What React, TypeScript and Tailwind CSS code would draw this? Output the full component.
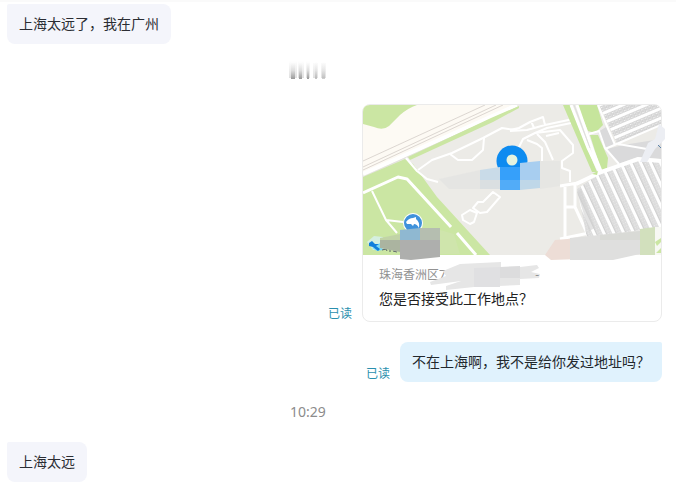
import type { ReactNode } from "react";

const fontStack = "font-['Noto_Sans','Noto_Sans_CJK_SC',sans-serif]";

interface MessageProps {
  children: ReactNode;
}

function ReceivedMessage({ children }: MessageProps) {
  return (
    <div className="flex justify-start">
      <p className="rounded-lg rounded-tl-xs bg-[#f4f5fb] px-3 py-2 text-sm leading-6 text-[#2b2d33]">
        {children}
      </p>
    </div>
  );
}

function SentMessage({ children }: MessageProps) {
  return (
    <div className="mr-[7px] flex items-end justify-end gap-2.5">
      <span className="text-xs leading-4 text-[#2a8fae]">已读</span>
      {children}
    </div>
  );
}

function TimeRow({ children }: MessageProps) {
  return (
    <div className="flex h-15 items-center justify-center pr-15 text-sm text-[#8c8c8c]">
      {children}
    </div>
  );
}

/** Timestamp that has been smudged out */
function SmudgedTime() {
  return (
    <svg width="40" height="18" viewBox="0 0 40 18" className="relative -top-1" aria-hidden="true">
      <defs>
        <linearGradient id="smudge" x1="0" y1="0" x2="0" y2="1">
          <stop offset="0" stopColor="#fff" />
          <stop offset="0.5" stopColor="#dedede" />
          <stop offset="1" stopColor="#999" />
        </linearGradient>
        <linearGradient id="smudgeLight" x1="0" y1="0" x2="0" y2="1">
          <stop offset="0" stopColor="#fff" />
          <stop offset="1" stopColor="#d2d2d2" />
        </linearGradient>
      </defs>
      <path d="M1 0H9V17H1ZM10 0H16V17H10ZM18 0H22V17H18ZM25 2H30V17H25ZM33 2H38V17H33Z" fill="url(#smudgeLight)" opacity="0.7" />
      <g fill="url(#smudge)">
        <rect x="3" y="1" width="4" height="17" />
        <rect x="11" y="1" width="3" height="17" />
        <rect x="19" y="1" width="2" height="17" />
        <rect x="27" y="1" width="2" height="17" opacity="0.6" />
        <rect x="34" y="1" width="3" height="17" opacity="0.5" />
      </g>
    </svg>
  );
}

function LocationMap() {
  return (
    <svg
      viewBox="0 0 298 150"
      className="relative z-10 block w-full overflow-visible"
      role="img"
      aria-label="地图"
    >
      <defs>
        <clipPath id="mapClip">
          <path d="M0 150V7Q0 0 7 0H291Q298 0 298 7V150Z" />
        </clipPath>
        <pattern id="housesTop" width="4" height="9" patternUnits="userSpaceOnUse" patternTransform="rotate(-23 240 10)">
          <rect width="4" height="9" fill="#fff" />
          <rect y="1" width="4" height="6" fill="#e2e2e2" />
          <path d="M0.5 1.5H3V3.5H0.5ZM0.5 4.5H3V6.5H0.5Z" fill="#f5f5f5" stroke="#cacaca" strokeWidth="0.7" />
        </pattern>
        <pattern id="housesBottom" width="3" height="9" patternUnits="userSpaceOnUse" patternTransform="rotate(65 240 80)">
          <rect width="3" height="9" fill="#fff" />
          <rect y="2" width="3" height="6" fill="#e4e4e4" />
          <rect y="7" width="3" height="1" fill="#cfcfcf" />
          <path d="M0.5 2.5H2.3V4H0.5ZM0.5 5H2.3V6.5H0.5Z" fill="#fafafa" stroke="#cfcfcf" strokeWidth="0.6" />
        </pattern>
      </defs>

      <g clipPath="url(#mapClip)">
        <rect width="298" height="150" fill="#ecebe7" />

        {/* Railway */}
        <path d="M0 0H152L0 68Z" fill="#fdfaf4" />
        <path d="M0 0H54Q45 3 37 10L26 21Q20 26 11 22L0 19Z" fill="#cbe6a3" />
        <path d="M0 56L122 0M0 62L133 0M0 65L140 0" fill="none" stroke="#d3cdc8" strokeWidth="0.8" />
        <path d="M0 69L154 0" stroke="#fff" strokeWidth="4" />
        <path d="M0 72L155 2" stroke="#dcdad5" strokeWidth="0.6" />
        <path d="M45 52L128 13L156 1V3L130 17L47 55Z" fill="#cbe6a3" />

        {/* Park */}
        <path d="M0 72L42 54L50 59L74 92L127 150H0Z" fill="#cbe6a3" />
        <g fill="none" stroke="#fff" strokeWidth="3" strokeLinejoin="round">
          <path d="M0 88L35 72L44 74L88 122M94 128L113 150" />
          <path d="M9 86L23 115L34 128M23 115L40 117" strokeWidth="2" />
          <path d="M43 53L54 66L64 74L75 77" strokeWidth="2" />
          <path d="M55 65L69 55L89 48L120 33L139 23L152 25" strokeWidth="2" />
          <path d="M87 49L95 55L109 55L120 45L121 33" strokeWidth="2" />
          <path d="M99 110L107 105L114 108L111 117L107 119L100 115ZM110 103L115 97L120 97L130 87L137 92L124 107L117 108Z" strokeWidth="2" />
        </g>

        {/* Estate streets */}
        <g fill="none" stroke="#fff" strokeWidth="2" strokeLinejoin="round">
          <path d="M147 25L156 23L167 17L180 12L182 20M168 16L171 23M147 26L164 25L182 20L210 14" />
          <path d="M154 46L160 34L172 28L184 23L213 17" />
          <path d="M172 28L197 25L210 40V48L199 56V63L207 66V77" />
          <path d="M164 35L174 39L179 43V56M174 29L182 37L190 55" />
          <path d="M183 31L196 28" />
          <path d="M197 81L215 78M202 82V135M212 80V102H202M212 102L224 128M197 134L226 128" strokeWidth="3" />
        </g>

        {/* Avenue and green belt */}
        <path d="M200 0H207L234 67H229ZM214 0H234L240 20L232 28L225 26Z" fill="#c6e59c" />
        <path d="M227 30H235L245 53L244 63L238 65Z" fill="#c6e59c" />
        <path d="M208 0L225 43L236 66M214 0L230 46L238 66" fill="none" stroke="#fff" strokeWidth="3" />
        <path d="M211 0L227 43" stroke="#d9d9d9" strokeWidth="0.8" />

        {/* Housing blocks */}
        <path d="M236 0H298V21L254 38Z" fill="url(#housesTop)" />
        <path d="M235 27L243 22L252 40L242 43Z" fill="#dadadb" />
        <path d="M244 44L260 40L298 34V54L275 52L255 59Z" fill="#dadadb" />
        <path d="M214 84L238 68L275 56L298 57V122L224 133Z" fill="url(#housesBottom)" />
        <g fill="none" stroke="#fff" strokeWidth="3">
          <path d="M235 0L252 40M226 29L236 26L242 43L256 59" strokeWidth="2" />
          <path d="M242 44L298 20M255 39L284 44" strokeWidth="2" />
          <path d="M213 79L238 67L275 54L298 56" strokeWidth="4" />
        </g>
        <path d="M214 87L218 84L232 123L226 126Z" fill="#d0d0d0" opacity="0.6" />
        <path d="M229 69L235 66L234 70Z" fill="#c6e59c" />
      </g>

      {/* Main pin, pixelated along its lower half */}
      <circle cx="149" cy="56" r="15.5" fill="#0d8bf0" />
      <circle cx="149" cy="55" r="5.5" fill="#e4f3df" />
      <path d="M76 74L117 65V84H86Z" fill="#e4e4e2" opacity="0.8" />
      <path d="M117 65L137 62V75H117Z" fill="#c9dbe8" />
      <path d="M117 75H137V84H117Z" fill="#dadfe1" />
      <path d="M137 62H157V75H137Z" fill="#36a0fa" />
      <path d="M137 75H157V85H137Z" fill="#52acf8" />
      <path d="M157 58L177 56V75H157Z" fill="#a8cef0" />
      <path d="M157 75H177V83L157 85Z" fill="#bfd7e8" />
      <path d="M177 56H197V81L177 84Z" fill="#e6e6e3" />

      {/* Aquarium marker */}
      <circle cx="50" cy="118" r="10" fill="#fff" />
      <circle cx="50" cy="118" r="9" fill="#3f92db" />
      <path d="M43 117Q46 113 50 113L53 112L53 114Q57 117 56 123Q54 119 51 119L50 121L48 119L44 119Z" fill="#fff" />

      {/* Second marker */}
      <path d="M4 137L11 131L20 132V145L10 145Z" fill="#d5efdf" />
      <path d="M9 143L17 138L20 145L14 146Z" fill="#7fdcf5" />
      <path d="M6 138L9 136L12 139L16 139L13 141L17 144L15 146L10 142L6 141Z" fill="#117fdc" />
      <path d="M19 145L23 144L24 146M27 144V147M30 146L34 147" fill="none" stroke="#5c6468" />

      {/* Pixelated label areas */}
      <path d="M17 133L37 129V135H17Z" fill="#c1d3a6" />
      <path d="M17 135H37V147L17 143Z" fill="#abb4a0" />
      <path d="M37 125L57 123V135H37Z" fill="#8fb8d1" />
      <path d="M57 123H77V135H57Z" fill="#b5beb0" />
      <path d="M37 135H77V152L48 155L37 154Z" fill="#aeafad" />
      <path d="M77 125L91 129L97 149H77Z" fill="#cfe5ae" opacity="0.8" />
      <path d="M182 150L192 135L217 133V154L188 155Z" fill="#edddd6" />
      <path d="M207 133L277 126V149L250 155H207Z" fill="#dfdfde" />
      <path d="M237 130L277 126V135H237Z" fill="#d9dad6" />
      <path d="M277 124L292 122V150H277Z" fill="#d2e0bd" />
      <path d="M292 122H298V150H292Z" fill="#f7f8f3" />
      <path d="M292 137L298 133V137L294 141ZM293 148L298 143V148Z" fill="#cbe6a3" />
      <path d="M277 57L285 38L292 34L296 19L302 24L302 34L292 44L284 57Z" fill="#eceef3" />
      <path d="M295 40L298 43" stroke="#5b83ab" />

      {/* Strokes over the address line */}
      <g fill="#e6e6e6">
        <path d="M80 166L97 159L138 157L138 162L157 162L174 160L176 163L168 167L177 169L176 173L157 174V180L111 182L83 185L83 181L98 176L68 180L67 177L83 171Z" />
        <path d="M111 163L137 162V182H111Z" fill="#e0e0e2" />
        <path d="M137 162L157 161V173H137Z" fill="#dcdcdd" />
      </g>
    </svg>
  );
}

function LocationCard() {
  return (
    <article className="w-75 rounded-lg border border-[#ebebeb] bg-white">
      <LocationMap />
      <div className="px-4 pt-2.5 pb-2">
        <div className="flex w-40 justify-between text-xs leading-5 text-[#929292]">
          <span>珠海香洲区7</span>
          <span className="relative z-20">-</span>
        </div>
        <p className="text-sm leading-7 text-[#222]">您是否接受此工作地点？</p>
      </div>
    </article>
  );
}

export default function App() {
  return (
    <main lang="zh-CN" className={`border-t-2 border-[#fafafa] bg-white px-[7px] pt-0.5 ${fontStack}`}>
      <ReceivedMessage>上海太远了，我在广州</ReceivedMessage>

      <TimeRow>
        <SmudgedTime />
      </TimeRow>

      <SentMessage>
        <LocationCard />
      </SentMessage>

      <div className="mt-5">
        <SentMessage>
          <p className="rounded-lg rounded-tr-xs bg-[#e0f2fd] px-3 py-2 text-sm leading-6 text-[#22282d]">
            不在上海啊，我不是给你发过地址吗？
          </p>
        </SentMessage>
      </div>

      <TimeRow>
        <time dateTime="10:29">10:29</time>
      </TimeRow>

      <ReceivedMessage>上海太远</ReceivedMessage>
    </main>
  );
}
